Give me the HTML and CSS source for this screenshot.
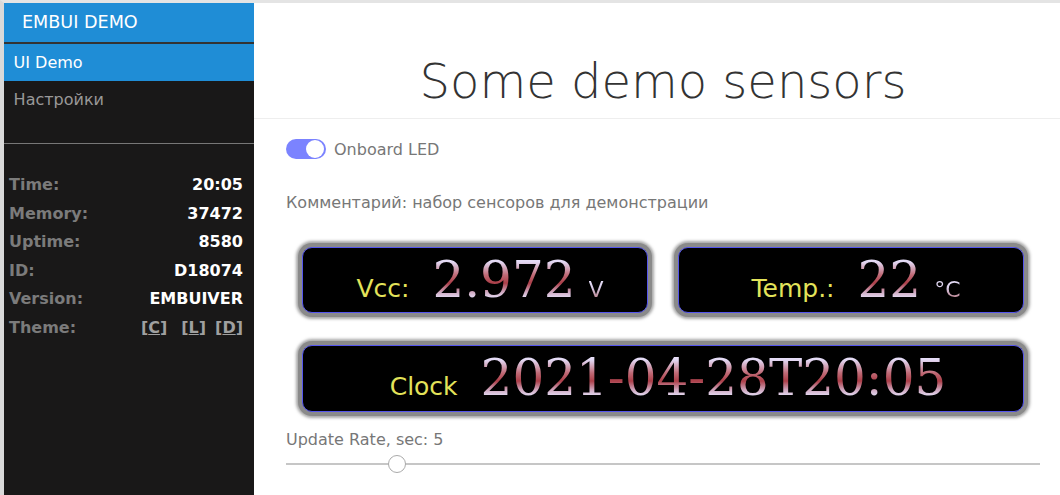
FILE: index.html
```html
<!DOCTYPE html>
<html lang="ru">
<head>
<meta charset="utf-8">
<title>EmbUI Demo</title>
<link rel="stylesheet" href="styles.css">
</head>
<body>
<div class="page">
  <nav class="menu">
    <div class="menu-heading">EMBUI DEMO</div>
    <ul class="menu-list">
      <li class="menu-item selected"><a class="menu-link" href="#">UI Demo</a></li>
      <li class="menu-item"><a class="menu-link" href="#">Настройки</a></li>
    </ul>
    <div class="menu-divider"></div>
    <div class="sys-info">
      <div class="info-row"><span class="info-label">Time:</span><span class="info-value">20:05</span></div>
      <div class="info-row"><span class="info-label">Memory:</span><span class="info-value">37472</span></div>
      <div class="info-row"><span class="info-label">Uptime:</span><span class="info-value">8580</span></div>
      <div class="info-row"><span class="info-label">ID:</span><span class="info-value">D18074</span></div>
      <div class="info-row"><span class="info-label">Version:</span><span class="info-value">EMBUIVER</span></div>
      <div class="info-row"><span class="info-label">Theme:</span>
        <span class="theme-links">
          <a class="theme-link" href="#">[<u>C</u>]</a>
          <a class="theme-link" href="#">[<u>L</u>]</a>
          <a class="theme-link" href="#">[<u>D</u>]</a>
        </span>
      </div>
    </div>
  </nav>
  <main class="main">
    <header class="header"><h1>Some demo sensors</h1></header>
    <div class="content">
      <div class="switch-row">
        <span class="switch"></span>
        <span>Onboard LED</span>
      </div>
      <p class="comment">Комментарий: набор сенсоров для демонстрации</p>
      <div class="displays">
        <div class="display">
          <span class="d-label">Vcc:</span><span class="d-value">2.972</span><span class="d-unit">V</span>
        </div>
        <div class="display">
          <span class="d-label">Temp.:</span><span class="d-value">22</span><span class="d-unit">°C</span>
        </div>
        <div class="display display-wide">
          <span class="d-label">Clock</span><span class="d-value">2021-04-28T20:05</span>
        </div>
      </div>
      <p class="range-label">Update Rate, sec: 5</p>
      <input class="range" type="range" min="1" max="30" value="5">
    </div>
  </main>
</div>
</body>
</html>
```

FILE: styles.css
```css
html, body {
  margin: 0;
  padding: 0;
  background: #fff;
}

body {
  font-family: "DejaVu Sans", "Liberation Sans", sans-serif;
}

.page {
  display: flex;
  height: 495px;
  box-sizing: border-box;
  border-top: 3px solid #e4e4e4;
  border-left: 4px solid #d9d9d9;
  overflow: hidden;
}

/* ---------- side menu ---------- */
.menu {
  width: 250px;
  flex: none;
  background: #191818;
}

.menu-heading {
  height: 39px;
  line-height: 39px;
  padding-left: 18px;
  font-size: 17.6px;
  color: #fff;
  background: #1f8dd6;
  border-bottom: 2px solid #333;
  white-space: nowrap;
}

.menu-list {
  list-style: none;
  margin: 0;
  padding: 0;
}

.menu-link {
  display: block;
  padding: 9.6px 0 9.6px 9.6px;
  font-size: 16px;
  line-height: 18.3px;
  color: #999;
  text-decoration: none;
}

.menu-item.selected .menu-link {
  background: #1f8dd6;
  color: #fff;
}

.menu-divider {
  margin-top: 24.5px;
  border-top: 1px solid #777;
}

.sys-info {
  padding: 27px 11px 0 5px;
  font-size: 16px;
  font-weight: bold;
}

.info-row {
  display: flex;
  justify-content: space-between;
  line-height: 28.4px;
}

.info-label {
  color: #7b7b7b;
}

.info-value {
  color: #fff;
}

.theme-links {
  display: flex;
}

.theme-link {
  color: #a0a0a0;
  text-decoration: none;
}

.theme-link + .theme-link {
  margin-left: 14px;
}

.theme-link:last-child {
  margin-left: 9px;
}

/* ---------- main ---------- */
.main {
  flex: 1 0 auto;
  margin-right: -12px;
  color: #777;
}

.header {
  text-align: center;
  padding-top: 40px;
  border-bottom: 1px solid #eee;
  color: #333;
}

.header h1 {
  margin: 9.6px 0;
  font-size: 48px;
  font-weight: 200;
  line-height: normal;
}

.content {
  padding: 0 32px;
  font-size: 16px;
}

.switch-row {
  display: flex;
  align-items: center;
  gap: 8px;
  margin-top: 20px;
  height: 20px;
}

.switch {
  position: relative;
  width: 40px;
  height: 20px;
  border-radius: 10px;
  background: #7b83ff;
}

.switch::after {
  content: "";
  position: absolute;
  top: 1px;
  right: 2px;
  width: 18px;
  height: 18px;
  border-radius: 50%;
  background: #fff;
}

.comment {
  margin: 31px 0 0;
  line-height: 25.6px;
}

/* ---------- displays ---------- */
.displays {
  display: grid;
  grid-template-columns: 1fr 1fr;
  column-gap: 30px;
  row-gap: 32px;
  margin: 31.4px 16px 0;
}

.display {
  display: flex;
  justify-content: center;
  align-items: baseline;
  box-sizing: border-box;
  height: 66px;
  padding: 7px 0 0 10px;
  background: #000;
  border: 1px solid #5555ee;
  border-radius: 10px;
  box-shadow: 0 0 0 4px #8a8a8a, 0 0 3px 6px rgba(138, 138, 138, 0.75);
}

.display-wide {
  grid-column: 1 / span 2;
  height: 67px;
}

.d-label {
  font-size: 25px;
  color: #e3e35a;
  margin-right: 23px;
}

.d-value,
.d-unit {
  display: inline-block;
  -webkit-background-clip: text;
  background-clip: text;
  color: transparent;
}

.d-value {
  font-family: "DejaVu Serif", "Liberation Serif", serif;
  font-size: 50px;
  line-height: 50px;
  background-image: linear-gradient(to bottom, #f2ecff 0%, #e2d8f4 14%, #c06a76 40%, #ac3e48 56%, #cfa8c0 74%, #e4dcf4 86%, #f0eaff 100%);
}

.d-unit {
  font-size: 22px;
  line-height: 24px;
  margin-left: 13px;
  background-image: linear-gradient(to bottom, #ece6ff 0%, #d8cce8 40%, #c08a98 80%, #b08090 100%);
}

.range-label {
  margin: 15.2px 0 0;
  line-height: 25.6px;
}

.range {
  -webkit-appearance: none;
  appearance: none;
  display: block;
  width: 100%;
  height: 22px;
  margin: 0;
  background: transparent;
}

.range::-webkit-slider-runnable-track {
  height: 2px;
  background: #c6c6c6;
}

.range::-webkit-slider-thumb {
  -webkit-appearance: none;
  appearance: none;
  box-sizing: border-box;
  width: 18px;
  height: 18px;
  margin-top: -8px;
  border-radius: 50%;
  background: #fff;
  border: 1px solid #aaa;
}
```
